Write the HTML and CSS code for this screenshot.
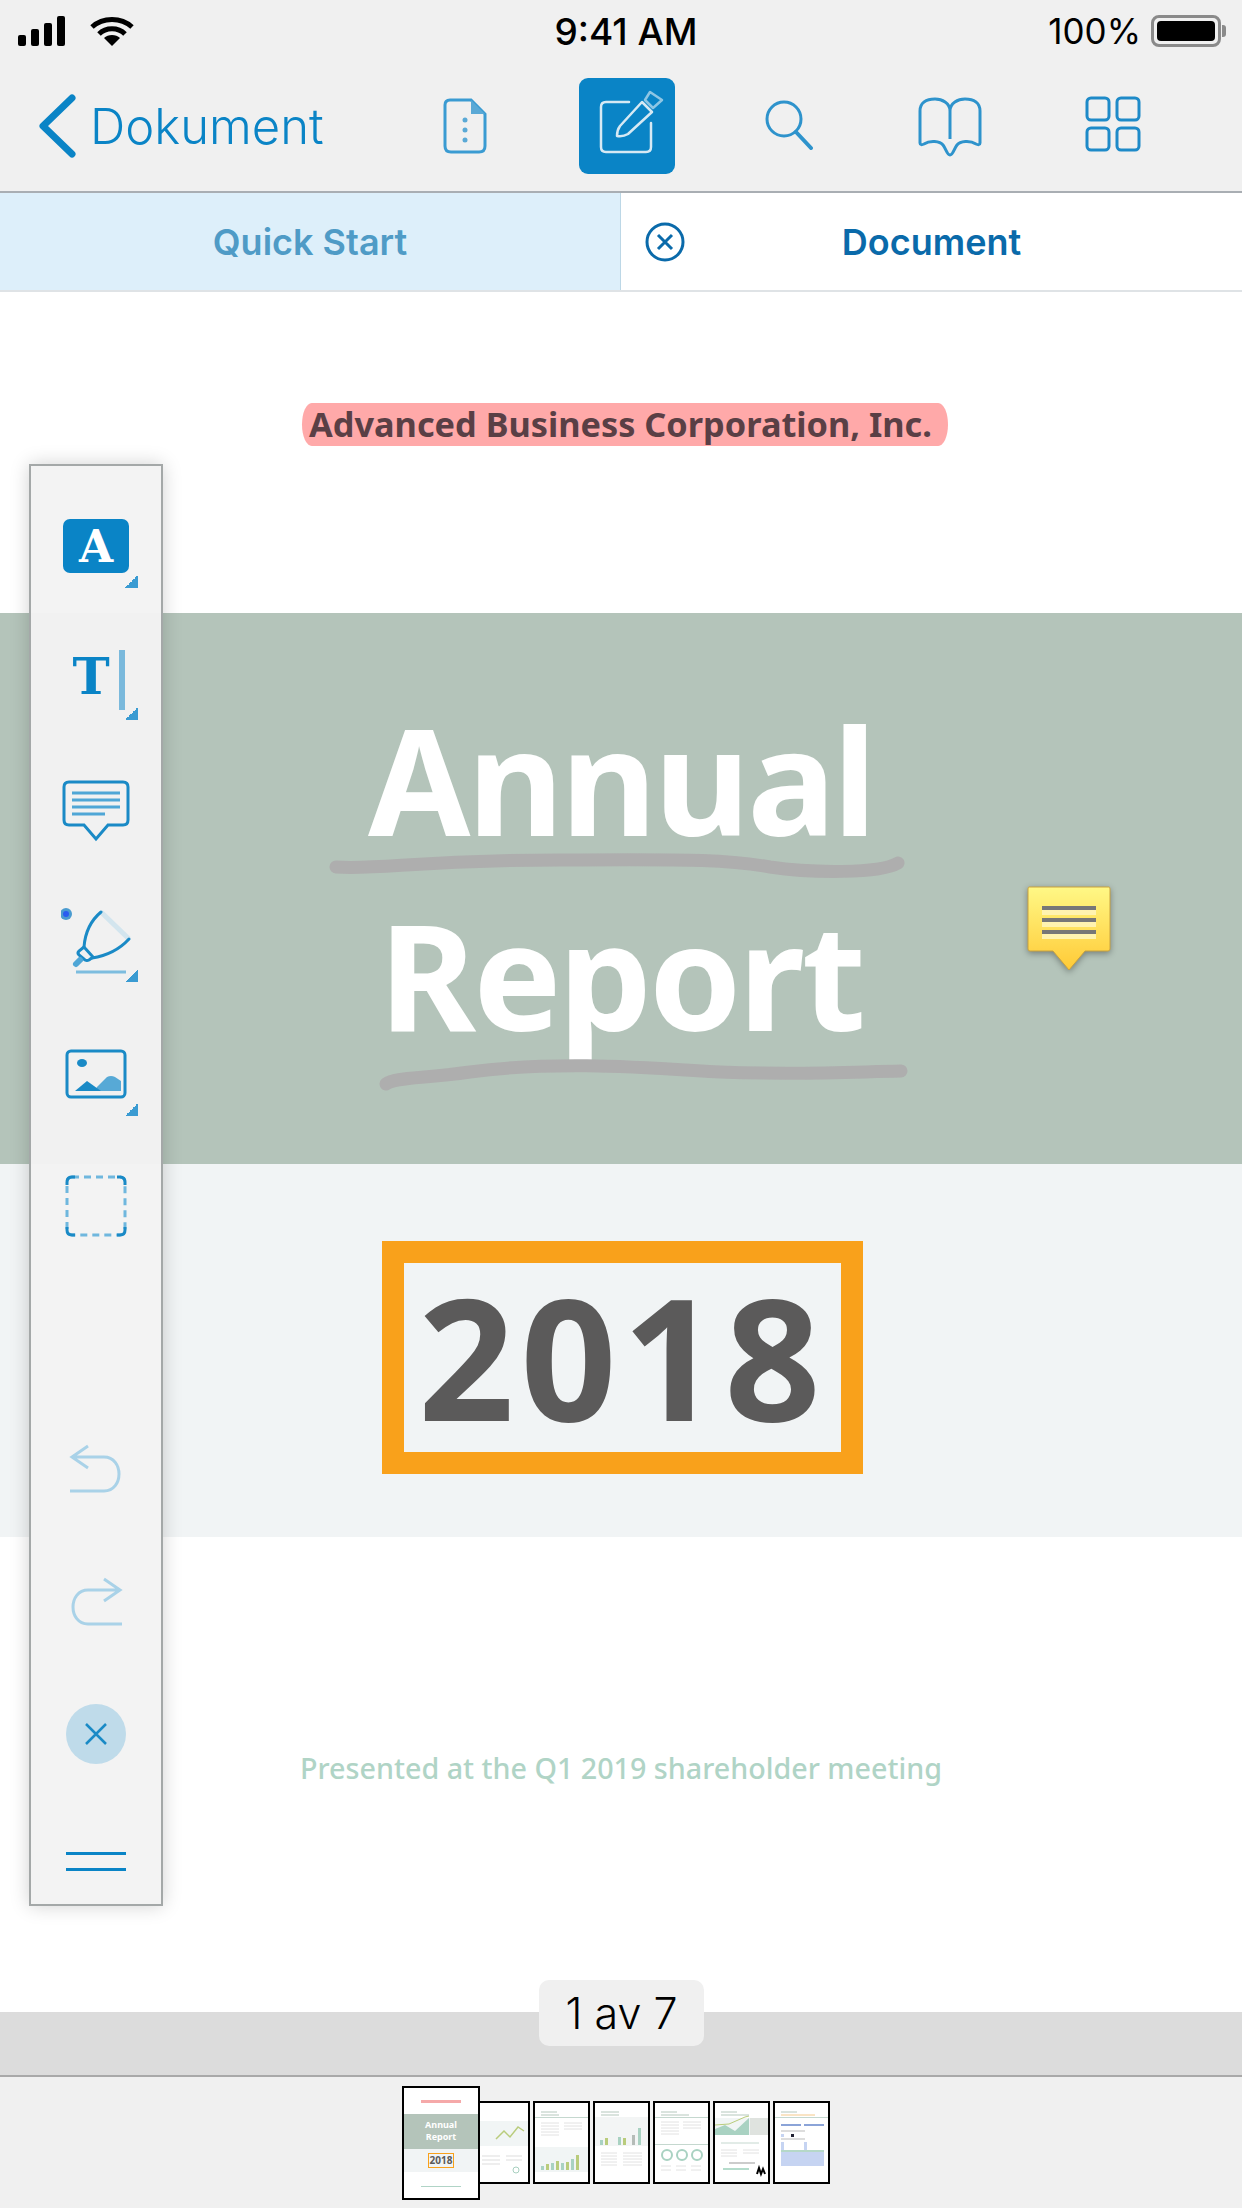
FILE: index.html
```html
<!DOCTYPE html>
<html lang="en">
<head>
    <meta charset="UTF-8">
    <meta name="viewport" content="width=device-width, initial-scale=1.0">
    <title>Document</title>
    <link rel="stylesheet" href="styles.css">
</head>
<body>
    <div class="screen">
        <!-- Status bar -->
        <div class="status-bar">
            <div class="status-left">
                <svg width="48" height="30" viewBox="0 0 48 30"><g fill="#000"><rect x="0" y="19" width="8" height="11" rx="2"/><rect x="13" y="13" width="8" height="17" rx="2"/><rect x="26" y="7" width="8" height="23" rx="2"/><rect x="39" y="0" width="8" height="30" rx="2"/></g></svg>
                <svg width="44" height="30" viewBox="0 0 44 30"><g fill="none" stroke="#000" stroke-width="5"><path d="M2 11C13 1 31 1 42 11"/><path d="M9 18C16 11 28 11 35 18"/></g><path d="M14 22C18 18 26 18 30 22L22 30Z" fill="#000"/></svg>
            </div>
            <div class="status-time">9:41 AM</div>
            <div class="status-right">
                <span>100%</span>
                <div class="battery"><div class="battery-fill"></div></div>
                <div class="battery-cap"></div>
            </div>
        </div>

        <!-- Navigation -->
        <div class="nav-bar">
            <div class="nav-back">
                <svg width="38" height="64" viewBox="0 0 38 64"><path d="M34 4L5 32L34 60" fill="none" stroke="#0a84c6" stroke-width="7" stroke-linecap="round" stroke-linejoin="round"/></svg>
                <span>Dokument</span>
            </div>
            <div class="nav-icon nav-doc">
                <svg width="44" height="56" viewBox="0 0 44 56"><path d="M7 2H28L42 16V48Q42 54 36 54H8Q2 54 2 48V7Q2 2 7 2Z" fill="none" stroke="#3a9bd2" stroke-width="3"/><path d="M28 2L42 16H28Z" fill="#5aa9d6"/><g fill="#5aa9d6"><circle cx="22" cy="22" r="2.5"/><circle cx="22" cy="32" r="2.5"/><circle cx="22" cy="42" r="2.5"/></g></svg>
            </div>
            <div class="nav-active">
                <svg width="96" height="96" viewBox="0 0 96 96"><g fill="none" stroke="#d6e9f4" stroke-width="2.5" stroke-linecap="round" stroke-linejoin="round"><path d="M50 24H27Q22 24 22 29V69Q22 74 27 74H67Q72 74 72 69V45"/><path d="M38 58Q38 52 41 48L63 24L73 34L49 56Q44 59 38 58Z"/><path d="M71 14L83 22L74 30L66 22Z" opacity="0.65"/></g></svg>
            </div>
            <div class="nav-icon nav-search">
                <svg width="48" height="50" viewBox="0 0 48 50"><circle cx="19" cy="19" r="17" fill="none" stroke="#2e93cc" stroke-width="3"/><path d="M31 32L46 48" stroke="#2e93cc" stroke-width="4" stroke-linecap="round"/></svg>
            </div>
            <div class="nav-icon nav-book">
                <svg width="64" height="60" viewBox="0 0 64 60"><path d="M32 14C32 6 24 2 17 2C8 2 2 6 2 14V46C2 48 4 48 6 47C12 43 22 44 25 48C28 52 29 58 32 58C35 58 36 52 39 48C42 44 52 43 58 47C60 48 62 48 62 46V14C62 6 56 2 47 2C40 2 32 6 32 14V42" fill="none" stroke="#2e93cc" stroke-width="3"/></svg>
            </div>
            <div class="nav-icon nav-grid">
                <svg width="56" height="56" viewBox="0 0 56 56"><g fill="none" stroke="#1e8ac8" stroke-width="3"><rect x="2" y="2" width="22" height="22" rx="4"/><rect x="32" y="2" width="22" height="22" rx="4"/><rect x="2" y="32" width="22" height="22" rx="4"/><rect x="32" y="32" width="22" height="22" rx="4"/></g></svg>
            </div>
        </div>

        <!-- Tabs -->
        <div class="tabs">
            <div class="tab tab-quick">Quick Start</div>
            <div class="tab tab-doc">
                <svg class="tab-close" width="40" height="40" viewBox="0 0 40 40"><circle cx="20" cy="20" r="18" fill="none" stroke="#0a6aaa" stroke-width="3"/><path d="M13 13L27 27M27 13L13 27" stroke="#0a6aaa" stroke-width="3"/></svg>
                <span>Document</span>
            </div>
        </div>

        <!-- Page content -->
        <div class="doc">
            <div class="doc-head"><span class="doc-company">Advanced Business Corporation, Inc.</span></div>
            <div class="doc-band">
                <div class="doc-title">Annual</div>
                <div class="doc-title">Report</div>
                <svg class="doc-scribble" width="1242" height="551" viewBox="0 0 1242 551"><g fill="none" stroke="#aeaeae" stroke-width="13" stroke-linecap="round"><path d="M336 254C380 257 420 247 560 247C700 246 730 247 770 254C810 260 880 261 898 250"/><path d="M386 471C395 464 420 466 470 459C560 447 650 455 720 459C800 462 850 459 901 458"/></g></svg>
            </div>
            <div class="doc-year-row"><div class="doc-year">2018</div></div>
            <div class="doc-foot">Presented at the Q1 2019 shareholder meeting</div>

            <svg class="sticky-note" width="90" height="92" viewBox="0 0 90 92">
                <defs><linearGradient id="noteFill" x1="0" y1="0" x2="0" y2="1"><stop offset="0" stop-color="#fff886"/><stop offset="1" stop-color="#ffca36"/></linearGradient></defs>
                <path d="M5 2H85Q86 2 86 4V64Q86 66 84 66H61L45 85L29 66H6Q4 66 4 64V4Q4 2 5 2Z" fill="url(#noteFill)" stroke="#c9a23f" stroke-width="1"/>
                <g fill="#fff3b0"><rect x="18" y="25" width="54" height="5"/><rect x="18" y="37" width="54" height="5"/><rect x="18" y="49" width="54" height="5"/></g>
                <g fill="#777"><rect x="18" y="21" width="54" height="4"/><rect x="18" y="33" width="54" height="4"/><rect x="18" y="45" width="54" height="4"/></g>
            </svg>
        </div>

        <div class="page-track">
            <div class="page-pill">1 av 7</div>
        </div>

        <!-- Thumbnails -->
        <div class="thumbs">
            <div class="thumb thumb-main">
                <div class="tm-head"><span></span></div>
                <div class="tm-band">Annual<br>Report</div>
                <div class="tm-year"><span>2018</span></div>
                <div class="tm-foot"><span></span></div>
            </div>
            <div class="thumb thumb-under">
                <svg width="48" height="79" viewBox="0 0 48 79"><rect y="18" width="48" height="25" fill="#f1f5f5"/><path d="M16 36L24 28L30 34L38 24L44 28" fill="none" stroke="#b9cc7c" stroke-width="1.5"/><path d="M2 53H20M2 57H20M2 61H20M26 53H42M26 57H42" stroke="#ddd"/><circle cx="36" cy="67" r="3" fill="none" stroke="#a8d0c0"/></svg>
            </div>
            <div class="thumb">
                <svg width="53" height="79" viewBox="0 0 53 79"><path d="M6 9H22M6 12H24" stroke="#b5c8bd"/><rect y="14" width="53" height="1" fill="#c5d8cf"/><path d="M6 20H24M6 23H24M6 26H24M6 29H24M6 32H24M29 20H47M29 23H47M29 26H47" stroke="#e2e2e2"/><rect y="44" width="53" height="25" fill="#f1f5f5"/><g fill="#a9d2c2"><rect x="6" y="63" width="3" height="4"/><rect x="16" y="60" width="3" height="7"/><rect x="26" y="60" width="3" height="7"/><rect x="36" y="56" width="3" height="11"/></g><g fill="#b9cc7c"><rect x="11" y="61" width="3" height="6"/><rect x="21" y="58" width="3" height="9"/><rect x="31" y="59" width="3" height="8"/><rect x="41" y="52" width="3" height="15"/></g></svg>
            </div>
            <div class="thumb">
                <svg width="53" height="79" viewBox="0 0 53 79"><path d="M6 9H24M6 12H24" stroke="#b5c8bd"/><rect y="14" width="53" height="29" fill="#f3f5f5"/><g fill="#a9d2c2"><rect x="5" y="37" width="3" height="5"/><rect x="23" y="34" width="3" height="8"/><rect x="43" y="25" width="3" height="17"/></g><g fill="#b9cc7c"><rect x="10" y="35" width="3" height="7"/><rect x="28" y="35" width="3" height="7"/><rect x="37" y="32" width="3" height="10" fill="#b5bcb8"/></g><path d="M6 50H22M6 53H22M6 56H22M6 59H22M6 62H22M28 50H47M28 53H47M28 56H47M28 59H47M28 62H47" stroke="#e2e2e2"/></svg>
            </div>
            <div class="thumb">
                <svg width="53" height="79" viewBox="0 0 53 79"><path d="M6 9H22M6 12H34" stroke="#b5c8bd"/><rect y="14" width="53" height="1" fill="#c5d8cf"/><path d="M6 19H24M6 22H24M6 25H24M6 28H24M6 31H24M28 19H46M28 22H46M28 25H46" stroke="#e2e2e2"/><rect y="41" width="53" height="1" fill="#c5d8cf"/><g fill="none" stroke="#a9d2c2" stroke-width="2"><circle cx="12" cy="52" r="5"/><circle cx="27" cy="52" r="5"/><circle cx="42" cy="52" r="5"/></g><path d="M6 63H16M21 63H31M36 63H46M6 67H16M21 67H31M36 67H46" stroke="#e2e2e2"/></svg>
            </div>
            <div class="thumb">
                <svg width="53" height="79" viewBox="0 0 53 79"><path d="M6 9H22M6 12H34" stroke="#b5c8bd"/><rect y="15" width="53" height="17" fill="#f1f5f5"/><path d="M0 26L10 22L20 28L34 15V32H0Z" fill="#a9d2c2"/><path d="M0 22L14 21L30 14L34 13" fill="none" stroke="#b9cc7c"/><rect x="35" y="15" width="18" height="17" fill="#dfe3df"/><path d="M6 40H44" stroke="#c5d8cf"/><path d="M6 47H22M6 50H22M6 53H22M28 47H44M28 50H44" stroke="#e2e2e2"/><path d="M14 60H40" stroke="#999"/><path d="M8 66H34" stroke="#b5dccc" stroke-width="2"/><path d="M42 71L44 65L46 71L48 66L50 71" fill="none" stroke="#000" stroke-width="2"/></svg>
            </div>
            <div class="thumb">
                <svg width="53" height="79" viewBox="0 0 53 79"><path d="M6 9H22" stroke="#b5c8bd"/><path d="M6 12H40" stroke="#f4c98a"/><rect y="14" width="53" height="1" fill="#c5d8cf"/><rect x="6" y="21" width="20" height="2" fill="#8ba4d8"/><rect x="29" y="21" width="20" height="2" fill="#8ba4d8"/><path d="M6 28H30M6 36H30" stroke="#bbb"/><g fill="#c6d4f2"><rect x="6" y="31" width="3" height="3"/><rect x="16" y="31" width="3" height="3" fill="#223"/><rect x="6" y="39" width="3" height="8"/><rect x="29" y="39" width="3" height="8"/></g><rect x="6" y="49" width="43" height="14" fill="#c6d4f2"/><rect x="6" y="47" width="43" height="2" fill="#b5d8c8"/></svg>
            </div>
        </div>

        <!-- Floating annotation toolbar -->
        <div class="tool-panel">
            <div class="tool tool-a">
                <div class="tool-a-box">A</div>
                <i class="corner"></i>
            </div>
            <div class="tool tool-t">
                <span class="tool-t-letter">T</span><span class="tool-t-bar"></span>
                <i class="corner"></i>
            </div>
            <div class="tool tool-comment">
                <svg width="68" height="62" viewBox="0 0 68 62"><path d="M7 2H61Q66 2 66 7V40Q66 45 61 45H46L34 59L22 45H7Q2 45 2 40V7Q2 2 7 2Z" fill="none" stroke="#1a8ac6" stroke-width="3"/><path d="M10 13H58M10 20H58M10 27H58M10 34H43" stroke="#4fa6d6" stroke-width="3"/></svg>
            </div>
            <div class="tool tool-marker">
                <svg width="70" height="70" viewBox="0 0 70 70"><circle cx="5" cy="6" r="6" fill="#4a9bd0"/><circle cx="5" cy="6" r="3" fill="#2a5cf0"/><path d="M40 4L68 31" stroke="#d3e5ee" stroke-width="5"/><path d="M40 4C28 14 24 26 23 39M31 50C44 48 57 43 68 31" fill="none" stroke="#1a8ac6" stroke-width="3" stroke-linecap="round"/><path d="M23 39L18 43Q16 45 18 47L24 52Q26 53 28 52L32 49Z" fill="#f0f0f0" stroke="#1a8ac6" stroke-width="3"/><path d="M19 52L15 56" stroke="#4fa6d6" stroke-width="6" stroke-linecap="round"/><path d="M15 64H65" stroke="#7dbddf" stroke-width="3"/></svg>
                <i class="corner"></i>
            </div>
            <div class="tool tool-image">
                <svg width="62" height="50" viewBox="0 0 62 50"><rect x="2" y="2" width="58" height="46" rx="4" fill="none" stroke="#1a8ac6" stroke-width="3"/><ellipse cx="17" cy="14" rx="5" ry="4" fill="#1a8ac6"/><path d="M32 38L42 28Q46 26 50 28L56 32V42H30Z" fill="#57a9d6"/><path d="M10 42L22 32L36 42Z" fill="#1a8ac6"/></svg>
                <i class="corner"></i>
            </div>
            <div class="tool tool-select">
                <svg width="62" height="62" viewBox="0 0 62 62"><rect x="2" y="2" width="58" height="58" rx="5" fill="none" stroke="#6fb7de" stroke-width="3" stroke-dasharray="7 5"/><path d="M2 10V7Q2 2 7 2H10M52 2H55Q60 2 60 7V10M60 52V55Q60 60 55 60H52M10 60H7Q2 60 2 55V52" fill="none" stroke="#1a8ac6" stroke-width="3"/></svg>
            </div>
            <div class="tool-spacer"></div>
            <div class="tool tool-undo">
                <svg width="56" height="52" viewBox="0 0 56 52"><path d="M20 2L4 13L20 24M4 13H36C56 13 56 47 36 47H2" fill="none" stroke="#a9d2e8" stroke-width="3"/></svg>
            </div>
            <div class="tool tool-redo">
                <svg width="56" height="52" viewBox="0 0 56 52"><path d="M36 2L52 13L36 24M52 13H20C0 13 0 47 20 47H54" fill="none" stroke="#a9d2e8" stroke-width="3"/></svg>
            </div>
            <div class="tool tool-cancel">
                <div class="cancel-circle">
                    <svg width="24" height="24" viewBox="0 0 24 24"><path d="M2 2L22 22M22 2L2 22" stroke="#1a8ac6" stroke-width="2.5"/></svg>
                </div>
            </div>
            <div class="tool tool-grip"><span></span><span></span></div>
        </div>
    </div>
</body>
</html>
```

FILE: styles.css
```css
/* Basic Reset */
* {
    margin: 0;
    padding: 0;
    box-sizing: border-box;
}

body {
    background-color: #ffffff;
    font-family: "Inter", "Liberation Sans", sans-serif;
}

.screen {
    position: relative;
    width: 1242px;
    height: 2208px;
    display: flex;
    flex-direction: column;
    overflow: hidden;
}

/* Status bar */
.status-bar {
    height: 62px;
    background-color: #f0f0f0;
    display: flex;
    align-items: center;
    justify-content: space-between;
    padding: 0 18px;
    position: relative;
}

.status-left {
    display: flex;
    align-items: center;
    gap: 24px;
}

.status-time {
    position: absolute;
    left: 10px;
    right: 0;
    text-align: center;
    font-size: 37px;
    font-weight: 500;
    color: #000;
}

.status-right {
    display: flex;
    align-items: center;
    font-size: 35px;
    color: #000;
}

.battery {
    width: 70px;
    height: 32px;
    margin-left: 10px;
    border: 3px solid #8a8a8a;
    border-radius: 8px;
    padding: 3px;
}

.battery-fill {
    width: 100%;
    height: 100%;
    background-color: #000;
    border-radius: 4px;
}

.battery-cap {
    width: 4px;
    height: 12px;
    background-color: #8a8a8a;
    margin-right: -2px;
    margin-left: 1px;
    border-radius: 0 3px 3px 0;
}

/* Navigation */
.nav-bar {
    height: 131px;
    background-color: #f0f0f0;
    border-bottom: 2px solid #a9aeb3;
    position: relative;
}

.nav-back {
    position: absolute;
    left: 38px;
    top: 32px;
    display: flex;
    align-items: center;
    gap: 14px;
    color: #0a84c6;
    font-size: 49px;
    font-weight: 300;
}

.nav-icon,
.nav-active {
    position: absolute;
}

.nav-doc { left: 443px; top: 36px; }
.nav-search { left: 765px; top: 38px; }
.nav-book { left: 918px; top: 35px; }
.nav-grid { left: 1085px; top: 34px; }

.nav-active {
    left: 579px;
    top: 16px;
    width: 96px;
    height: 96px;
    background-color: #0a84c6;
    border-radius: 9px;
}

/* Tabs */
.tabs {
    height: 99px;
    display: flex;
    border-bottom: 2px solid #dfe3e6;
}

.tab {
    display: flex;
    align-items: center;
    justify-content: center;
    font-size: 36px;
    font-weight: 600;
}

.tab-quick {
    width: 621px;
    background-color: #ddeffa;
    border-right: 1px solid #bcd7e6;
    color: #4f9bc6;
}

.tab-doc {
    flex: 1;
    position: relative;
    background-color: #fff;
    color: #0a6aaa;
}

.tab-close {
    position: absolute;
    left: 24px;
    top: 29px;
}

/* Document */
.doc {
    position: relative;
    height: 1720px;
    background-color: #fff;
    display: flex;
    flex-direction: column;
}

.doc-head {
    height: 321px;
    padding-top: 111px;
    display: flex;
    justify-content: center;
    font-family: "Noto Sans", sans-serif;
}

.doc-company {
    height: 43px;
    line-height: 41px;
    padding: 0 16px 0 7px;
    margin-left: 8px;
    background-color: #ffa9a9;
    border-radius: 10px / 22px;
    color: #5a3f45;
    font-size: 34.3px;
    font-weight: 700;
}

.doc-band {
    position: relative;
    height: 551px;
    background-color: #b4c4ba;
    padding-top: 68px;
    font-family: "Noto Sans", sans-serif;
}

.doc-title {
    height: 195px;
    line-height: 195px;
    text-align: center;
    color: #fff;
    font-size: 148px;
    font-weight: 700;
    letter-spacing: -3px;
}

.doc-scribble {
    position: absolute;
    left: 0;
    top: 0;
}

.doc-year-row {
    height: 373px;
    background-color: #f1f4f5;
    padding: 77px 0 0 382px;
}

.doc-year {
    width: 481px;
    height: 233px;
    padding-bottom: 4px;
    border: 22px solid #f9a11b;
    display: flex;
    align-items: center;
    justify-content: center;
    color: #5b5a5a;
    font-family: "Noto Sans", sans-serif;
    font-size: 168px;
    font-weight: 700;
    letter-spacing: 6px;
}

.doc-foot {
    padding-top: 211px;
    text-align: center;
    color: #b0d4c6;
    font-family: "Noto Sans", sans-serif;
    font-size: 28.7px;
    font-weight: 500;
}

.sticky-note {
    position: absolute;
    left: 1024px;
    top: 593px;
    filter: drop-shadow(0 2px 3px rgba(0, 0, 0, 0.35));
}

/* Page indicator */
.page-track {
    position: relative;
    height: 65px;
    background-color: #dcdcdc;
    border-bottom: 2px solid #a9a9a9;
}

.page-pill {
    position: absolute;
    left: 539px;
    top: -32px;
    width: 165px;
    height: 66px;
    background-color: #f0f0f0;
    border-radius: 10px;
    display: flex;
    align-items: center;
    justify-content: center;
    color: #000;
    font-size: 43px;
    font-weight: 300;
}

/* Thumbnails */
.thumbs {
    flex: 1;
    background-color: #f0f0f0;
    display: flex;
    align-items: center;
    padding-left: 402px;
    gap: 3px;
}

.thumb {
    width: 57px;
    height: 83px;
    background-color: #fff;
    border: 2px solid #000;
    overflow: hidden;
    flex-shrink: 0;
}

.thumb svg {
    display: block;
}

.thumb-main {
    position: relative;
    z-index: 1;
    width: 78px;
    height: 114px;
    display: flex;
    flex-direction: column;
    font-family: "Noto Sans", sans-serif;
    font-weight: 700;
    text-align: center;
}

.thumb-under {
    width: 50px;
    margin-left: -3px;
    border-left: none;
}

.tm-head {
    height: 26px;
    padding-top: 12px;
}

.tm-head span {
    display: block;
    width: 40px;
    height: 3px;
    margin: 0 auto;
    background-color: #f5a9a9;
}

.tm-band {
    height: 35px;
    padding-top: 5px;
    background-color: #b4c4ba;
    color: #fff;
    font-size: 9px;
    line-height: 12px;
}

.tm-year {
    height: 23px;
    background-color: #f1f4f5;
    display: flex;
    align-items: center;
    justify-content: center;
    color: #5b5a5a;
    font-size: 10px;
}

.tm-year span {
    border: 1px solid #f9a11b;
    padding: 0 1px;
    line-height: 13px;
}

.tm-foot span {
    display: block;
    width: 40px;
    height: 1px;
    margin: 14px auto 0;
    background-color: #b0d4c6;
}

/* Floating toolbar */
.tool-panel {
    position: absolute;
    left: 29px;
    top: 464px;
    width: 134px;
    height: 1442px;
    background-color: rgba(243, 243, 243, 0.97);
    border: 2px solid #a4a8a8;
    box-shadow: 0 0 18px rgba(0, 0, 0, 0.18);
    display: flex;
    flex-direction: column;
    align-items: center;
    padding-top: 53px;
}

.tool {
    position: relative;
    width: 130px;
    display: flex;
    justify-content: center;
    align-items: center;
}

.corner {
    position: absolute;
    right: 23px;
    bottom: 0;
    width: 13px;
    height: 13px;
    background: linear-gradient(135deg, transparent 50%, #3a9bd2 50%);
}

.tool-a {
    height: 69px;
    align-items: flex-start;
}

.tool-a-box {
    width: 66px;
    height: 54px;
    background-color: #0a84c6;
    border-radius: 7px;
    color: #fff;
    display: flex;
    align-items: center;
    justify-content: center;
    font-family: "DejaVu Serif", "Liberation Serif", serif;
    font-size: 44px;
    font-weight: 700;
}

.tool-t {
    margin-top: 62px;
    height: 70px;
    align-items: flex-start;
    gap: 9px;
    padding-left: 5px;
}

.tool-t-letter {
    margin-top: -2px;
    color: #0a84c6;
    font-family: "DejaVu Serif", "Liberation Serif", serif;
    font-size: 50px;
    font-weight: 700;
    line-height: 58px;
}

.tool-t-bar {
    width: 6px;
    height: 60px;
    background-color: #7ab9dc;
}

.tool-comment {
    margin-top: 60px;
    height: 62px;
}

.tool-marker {
    margin-top: 66px;
    height: 74px;
    align-items: flex-start;
}

.tool-image {
    margin-top: 67px;
    height: 67px;
    align-items: flex-start;
}

.tool-select {
    margin-top: 59px;
    height: 62px;
}

.tool-spacer {
    height: 207px;
}

.tool-undo,
.tool-redo {
    height: 52px;
}

.tool-redo {
    margin-top: 81px;
}

.tool-cancel {
    margin-top: 75px;
    height: 60px;
}

.cancel-circle {
    width: 60px;
    height: 60px;
    border-radius: 50%;
    background-color: #bfdbea;
    display: flex;
    align-items: center;
    justify-content: center;
}

.tool-grip {
    margin-top: 88px;
    flex-direction: column;
    gap: 13px;
}

.tool-grip span {
    display: block;
    width: 60px;
    height: 3px;
    background-color: #0a84c6;
}
```
